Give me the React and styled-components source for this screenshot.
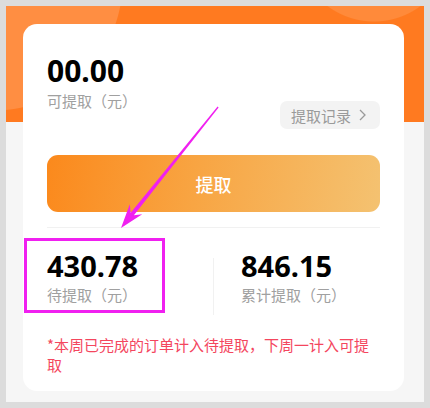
import styled, { createGlobalStyle } from "styled-components";

const GlobalStyle = createGlobalStyle`
  html, body {
    margin: 0;
    padding: 0;
    background: #dcdcdc;
  }
  body {
    font-family: "Noto Sans CJK SC", "Noto Sans", sans-serif;
  }
`;

const Page = styled.div`
  position: relative;
  width: 430px;
  height: 408px;
  padding: 6px;
  box-sizing: border-box;
`;

const Frame = styled.div`
  height: 396px;
  box-sizing: border-box;
  padding: 18px 20px 11px 17px;
  background:
    radial-gradient(circle at -12px -24px, #ff8e42 0 128px, transparent 129px),
    radial-gradient(circle at 368px -62px, #ff8a3a 0 77px, transparent 78px),
    linear-gradient(#ff7a20 0 116px, #f6f6f6 116px);
`;

const Card = styled.div`
  background: #fff;
  border-radius: 14px;
  padding: 29px 24px 18px 24px;
  height: 367px;
  box-sizing: border-box;
`;

const TopRow = styled.div`
  display: flex;
  justify-content: space-between;
  align-items: flex-start;
`;

const Amount = styled.div`
  font-family: "Noto Sans", "Noto Sans CJK SC", sans-serif;
  font-weight: 700;
  font-size: ${(p) => p.size || 30}px;
  line-height: 36px;
  color: #000;
`;

const Label = styled.div`
  font-size: 15px;
  line-height: 20px;
  color: #a0a0a0;
  margin-top: ${(p) => p.gap || 2}px;
`;

const RecordButton = styled.div`
  margin-top: 48px;
  display: flex;
  align-items: center;
  gap: 8px;
  height: 28px;
  width: 100px;
  box-sizing: border-box;
  padding-left: 11px;
  background: #f3f3f3;
  border-radius: 7px;
  font-size: 15px;
  color: #9a9a9a;
`;

const WithdrawButton = styled.div`
  margin-top: 26px;
  height: 57px;
  border-radius: 11px;
  background: linear-gradient(100deg, #fb891c 0%, #f8a543 45%, #f4c271 100%);
  display: flex;
  align-items: center;
  justify-content: center;
  color: #fff;
  font-size: 18px;
  font-weight: 500;
`;

const Divider = styled.div`
  height: 1px;
  background: #f1f1f1;
  margin-top: 15px;
`;

const Stats = styled.div`
  display: grid;
  grid-template-columns: 1fr 1px 1fr;
  margin-top: 20px;
`;

const Stat = styled.div`
  padding-left: ${(p) => (p.split ? 27 : 0)}px;
`;

const Separator = styled.div`
  margin-top: 10px;
  height: 57px;
  background: #f1f1f1;
`;

const Note = styled.div`
  margin-top: 20px;
  font-size: 15px;
  line-height: 20px;
  color: #f4465e;
`;

const Overlay = styled.svg`
  position: absolute;
  left: 0;
  top: 0;
  pointer-events: none;
`;

function Chevron() {
  return (
    <svg width="7" height="12" viewBox="0 0 7 12">
      <polyline points="1,1 6,6 1,11" fill="none" stroke="#9a9a9a" strokeWidth="1.3" />
    </svg>
  );
}

export default function App() {
  return (
    <>
      <GlobalStyle />
      <Page>
        <Frame>
          <Card>
            <TopRow>
              <div>
                <Amount>00.00</Amount>
                <Label>可提取（元）</Label>
              </div>
              <RecordButton>
                提取记录
                <Chevron />
              </RecordButton>
            </TopRow>
            <WithdrawButton>提取</WithdrawButton>
            <Divider />
            <Stats>
              <Stat>
                <Amount size={29}>430.78</Amount>
                <Label gap={1}>待提取（元）</Label>
              </Stat>
              <Separator />
              <Stat split>
                <Amount size={29}>846.15</Amount>
                <Label gap={1}>累计提取（元）</Label>
              </Stat>
            </Stats>
            <Note>*本周已完成的订单计入待提取，下周一计入可提取</Note>
          </Card>
        </Frame>
        <Overlay width="430" height="408" viewBox="0 0 430 408">
          <rect x="25.5" y="239.5" width="138" height="72" fill="none" stroke="#f020f0" strokeWidth="3" />
          <polygon
            points="218.6,107.4 133.9,215.3 142.2,214.3 121,228 129.8,204.3 130.7,212.7 217.6,106.6"
            fill="#f020f0"
          />
        </Overlay>
      </Page>
    </>
  );
}
